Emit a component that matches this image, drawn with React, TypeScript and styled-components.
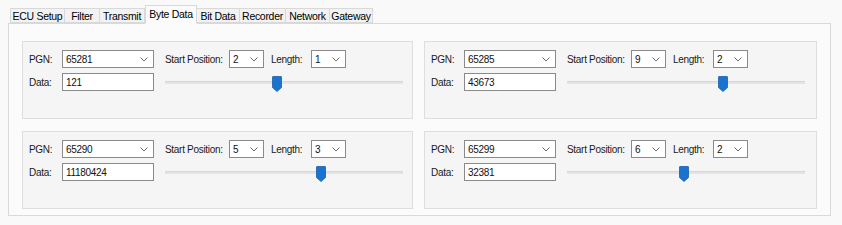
import React from 'react';
import styled, { createGlobalStyle } from 'styled-components';

const GlobalStyle = createGlobalStyle`
  html, body {
    margin: 0;
    padding: 0;
    background: #f9f9f9;
    font-family: "Liberation Sans", Arial, sans-serif;
    font-size: 10px;
    letter-spacing: -0.3px;
    color: #111;
  }
`;

const Window = styled.div`
  width: 842px;
  height: 225px;
  padding: 5px 0 0 8px;
  box-sizing: border-box;
`;

const TabStrip = styled.div`
  display: flex;
  align-items: flex-end;
  height: 18px;
  padding-left: 2px;
  position: relative;
  z-index: 1;
`;

const Tab = styled.div<{ $w: number; $active?: boolean }>`
  width: ${(p) => p.$w}px;
  height: ${(p) => (p.$active ? 19 : 15)}px;
  box-sizing: border-box;
  display: flex;
  align-items: center;
  justify-content: center;
  border: 1px solid #d9d9d9;
  border-left-width: ${(p) => (p.$active ? 1 : 0)}px;
  border-bottom-color: ${(p) => (p.$active ? '#fbfbfb' : '#d9d9d9')};
  background: ${(p) => (p.$active ? '#fbfbfb' : '#f2f2f2')};
  margin-bottom: ${(p) => (p.$active ? -1 : 0)}px;
  padding-bottom: ${(p) => (p.$active ? 2 : 0)}px;
  font-size: 10.5px;
  color: #000;
  white-space: nowrap;

  &:first-child {
    border-left-width: 1px;
  }
`;

const TabPage = styled.div`
  width: 823px;
  height: 193px;
  box-sizing: border-box;
  border: 1px solid #d9d9d9;
  background: #fbfbfb;
  padding: 17px 13px 6px 13px;
  display: grid;
  grid-template-columns: 391px 393px;
  grid-auto-rows: 78px;
  column-gap: 11px;
  row-gap: 12px;
`;

const Group = styled.div`
  box-sizing: border-box;
  border: 1px solid #dedede;
  background: #f5f5f5;
  padding: 8px 0 0 6px;
  display: flex;
  flex-direction: column;
  gap: 5px;
`;

const Row = styled.div`
  display: flex;
  align-items: center;
  height: 18px;
`;

const Label = styled.span<{ $w: number }>`
  width: ${(p) => p.$w}px;
  flex: none;
  color: #1a1a1a;
  white-space: nowrap;
`;

const Combo = styled.div<{ $w: number; $gap?: number }>`
  width: ${(p) => p.$w}px;
  height: 18px;
  box-sizing: border-box;
  border: 1px solid #8a8a8a;
  background: #fff;
  display: flex;
  align-items: center;
  justify-content: space-between;
  padding: 0 5px 0 3px;
  margin-right: ${(p) => p.$gap ?? 0}px;
  flex: none;
`;

const TextBox = styled.div`
  width: 92px;
  height: 18px;
  box-sizing: border-box;
  border: 1px solid #8a8a8a;
  background: #fff;
  display: flex;
  align-items: center;
  padding: 0 3px;
  margin-right: 11px;
  flex: none;
`;

const Slider = styled.div`
  width: 238px;
  height: 18px;
  position: relative;
  flex: none;
`;

const Track = styled.div`
  position: absolute;
  left: 0;
  right: 0;
  top: 8px;
  height: 3px;
  background: #e4e4e4;
  border-top: 1px solid #d6d6d6;
  box-sizing: border-box;
`;

const Thumb = styled.svg`
  position: absolute;
  top: 3px;
  width: 10px;
  height: 16px;
  margin-left: -5px;
`;

const Chevron = () => (
  <svg width="8" height="5" viewBox="0 0 8 5">
    <polyline points="0.5,0.5 4,4 7.5,0.5" fill="none" stroke="#6d6d6d" strokeWidth="1" />
  </svg>
);

type Entry = { pgn: string; start: string; length: string; data: string; pos: number };

const entries: Entry[] = [
  { pgn: '65281', start: '2', length: '1', data: '121', pos: 0.47 },
  { pgn: '65285', start: '9', length: '2', data: '43673', pos: 0.655 },
  { pgn: '65290', start: '5', length: '3', data: '11180424', pos: 0.655 },
  { pgn: '65299', start: '6', length: '2', data: '32381', pos: 0.49 },
];

const tabs = [
  { name: 'ECU Setup', w: 55 },
  { name: 'Filter', w: 35 },
  { name: 'Transmit', w: 45 },
  { name: 'Byte Data', w: 52, active: true },
  { name: 'Bit Data', w: 43 },
  { name: 'Recorder', w: 46 },
  { name: 'Network', w: 44 },
  { name: 'Gateway', w: 43 },
];

const ByteGroup: React.FC<{ e: Entry }> = ({ e }) => (
  <Group>
    <Row>
      <Label $w={33}>PGN:</Label>
      <Combo $w={92} $gap={11}>
        <span>{e.pgn}</span>
        <Chevron />
      </Combo>
      <Label $w={64}>Start Position:</Label>
      <Combo $w={35} $gap={7}>
        <span>{e.start}</span>
        <Chevron />
      </Combo>
      <Label $w={40}>Length:</Label>
      <Combo $w={35}>
        <span>{e.length}</span>
        <Chevron />
      </Combo>
    </Row>
    <Row>
      <Label $w={33}>Data:</Label>
      <TextBox>{e.data}</TextBox>
      <Slider>
        <Track />
        <Thumb viewBox="0 0 10 16" style={{ left: `${e.pos * 100}%` }}>
          <path d="M0.5 1 Q0.5 0.5 1 0.5 H9 Q9.5 0.5 9.5 1 V11.5 L5 15.5 L0.5 11.5 Z" fill="#1a73cf" stroke="#155fae" strokeWidth="0.8" />
        </Thumb>
      </Slider>
    </Row>
  </Group>
);

const App: React.FC = () => {
  return (
    <>
      <GlobalStyle />
      <Window>
        <TabStrip>
          {tabs.map((t) => (
            <Tab key={t.name} $w={t.w} $active={t.active}>
              {t.name}
            </Tab>
          ))}
        </TabStrip>
        <TabPage>
          {entries.map((e) => (
            <ByteGroup key={e.pgn} e={e} />
          ))}
        </TabPage>
      </Window>
    </>
  );
};

export default App;
